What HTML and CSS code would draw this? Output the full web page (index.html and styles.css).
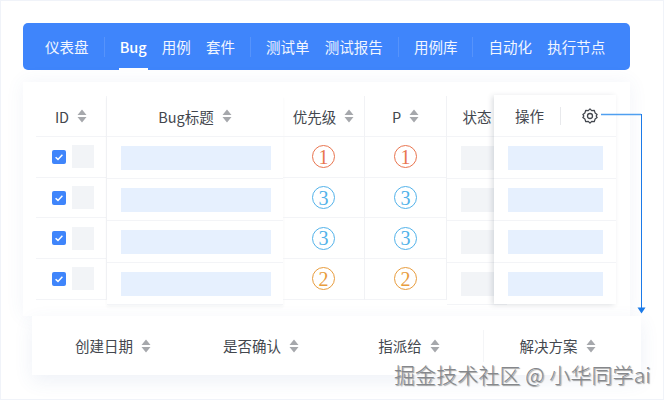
FILE: index.html
```html
<!DOCTYPE html>
<html lang="zh">
<head>
<meta charset="utf-8">
<title>Bug</title>
<link rel="stylesheet" href="styles.css">
</head>
<body>
<svg class="defs" width="0" height="0"><symbol id="sort" viewBox="0 0 10 14"><path d="M5 .5 9.500 6H.5zM5 13.500.5 8h9z" fill="#a6a8ac"/></symbol></svg>
<div class="page">
  <nav class="nav">
    <a>仪表盘</a><i></i>
    <a class="on">Bug</a><a>用例</a><a>套件</a><i></i>
    <a>测试单</a><a>测试报告</a><i></i>
    <a>用例库</a><i></i>
    <a>自动化</a><a>执行节点</a>
  </nav>
  <section class="card">
    <div class="table">
      <div class="col c-id">
        <div class="head">ID<svg class="sort"><use href="#sort"/></svg></div>
        <div class="row short"><b class="chk"><svg viewBox="0 0 14 14"><path d="M3.600 7.200 6 9.400l4.400-4.600"/></svg></b><span class="ph"></span></div>
        <div class="row short"><b class="chk"><svg viewBox="0 0 14 14"><path d="M3.600 7.200 6 9.400l4.400-4.600"/></svg></b><span class="ph"></span></div>
        <div class="row short"><b class="chk"><svg viewBox="0 0 14 14"><path d="M3.600 7.200 6 9.400l4.400-4.600"/></svg></b><span class="ph"></span></div>
        <div class="row short"><b class="chk"><svg viewBox="0 0 14 14"><path d="M3.600 7.200 6 9.400l4.400-4.600"/></svg></b><span class="ph"></span></div>
      </div>
      <div class="col c-title">
        <div class="head">Bug标题<svg class="sort"><use href="#sort"/></svg></div>
        <div class="row tall"><span class="bar"></span></div>
        <div class="row tall"><span class="bar"></span></div>
        <div class="row tall"><span class="bar"></span></div>
        <div class="row tall"><span class="bar"></span></div>
      </div>
      <div class="col c-pri">
        <div class="head">优先级<svg class="sort"><use href="#sort"/></svg></div>
        <div class="row short"><span class="num red">1</span></div>
        <div class="row short"><span class="num blue">3</span></div>
        <div class="row short"><span class="num blue">3</span></div>
        <div class="row short"><span class="num amber">2</span></div>
      </div>
      <div class="col c-pri">
        <div class="head">P<svg class="sort"><use href="#sort"/></svg></div>
        <div class="row short"><span class="num red">1</span></div>
        <div class="row short"><span class="num blue">3</span></div>
        <div class="row short"><span class="num blue">3</span></div>
        <div class="row short"><span class="num amber">2</span></div>
      </div>
      <div class="col c-status">
        <div class="head">状态</div>
        <div class="row tall"><span class="ph wide"></span></div>
        <div class="row tall"><span class="ph wide"></span></div>
        <div class="row tall"><span class="ph wide"></span></div>
        <div class="row tall"><span class="ph wide"></span></div>
      </div>
      <div class="ops">
        <div class="head ops-head">
          <span>操作</span><i></i>
          <svg class="gear" viewBox="0 0 16 16"><path d="M8 .9 9.700 2.600l2.500-.3.900 2.600 2 1.500L14.200 8l.9 1.600-2 1.500-.9 2.600-2.500-.3L8 15.100l-1.700-1.700-2.500.3-.9-2.600-2-1.500L1.800 8 .9 6.400l2-1.500.9-2.600 2.500.3z"/><circle cx="8" cy="8" r="2.500"/></svg>
        </div>
        <div class="row tall"><span class="bar small"></span></div>
        <div class="row tall"><span class="bar small"></span></div>
        <div class="row tall"><span class="bar small"></span></div>
        <div class="row tall"><span class="bar small"></span></div>
      </div>
    </div>
  </section>
  <section class="extra">
    <div>创建日期<svg class="sort"><use href="#sort"/></svg></div>
    <div>是否确认<svg class="sort"><use href="#sort"/></svg></div>
    <div>指派给<svg class="sort"><use href="#sort"/></svg></div>
    <div class="split">解决方案<svg class="sort"><use href="#sort"/></svg></div>
  </section>
  <svg class="arrow" viewBox="0 0 48 208" width="48" height="208"><path class="h" d="M1 4.500H41"/><path class="v" d="M41.500 4V198"/><path class="t" d="M37.500 197.500h8l-4 6z"/></svg>
  <div class="mark">掘金技术社区 @ 小华同学ai</div>
</div>
</body>
</html>
```
FILE: styles.css
```css
* { box-sizing: border-box; }
html, body { margin: 0; padding: 0; background: #fff; }
body { font-family: "Noto Sans CJK SC", "Noto Sans", sans-serif; color: #43474e; }
.defs { position: absolute; }
.page {
  position: relative;
  width: 664px;
  height: 400px;
  padding: 23px 34px 0 23px;
  overflow: hidden;
  background: #fff;
  box-shadow: inset 0 0 0 1px #f0f3f9;
}
.nav {
  display: flex;
  align-items: center;
  gap: 15.100px;
  height: 47px;
  padding-left: 22px;
  background: #3f85fb;
  border-radius: 5px;
  color: #f2f6ff;
  font-size: 14.500px;
}
.nav a { position: relative; line-height: 47px; white-space: nowrap; }
.nav i { width: 1px; height: 20px; background: rgba(255, 255, 255, .12); }
.nav .on { padding: 0 1px; margin: 0 -1px; font-weight: 500; color: #fff; }
.nav .on::after {
  content: "";
  position: absolute;
  left: 0;
  right: 0;
  bottom: 0;
  height: 2px;
  background: #fff;
}
.card {
  height: 234px;
  margin-top: 12px;
  padding: 14px 0 0 13px;
  background: #fff;
  box-shadow: 0 0 18px rgba(70, 100, 170, .07);
}
.table { position: relative; display: flex; align-items: flex-start; width: 594px; height: 220px; }
.col { flex: none; }
.c-id { width: 71px; border-right: 1px solid #f3f4f7; }
.c-title { width: 176px; box-shadow: 0 2px 3px rgba(60, 70, 100, .05); }
.c-pri { width: 82px; border-right: 1px solid #f1f2f5; }
.c-status { width: 60px; }
.head {
  display: flex;
  align-items: center;
  justify-content: center;
  height: 41px;
  border-bottom: 1px solid #f3f4f7;
  font-size: 14.500px;
}
.sort { flex: none; width: 10px; height: 14px; margin-left: 8px; }
.row { display: flex; align-items: center; border-bottom: 1px solid #f3f4f7; }
.short { height: 40.700px; justify-content: center; }
.tall { height: 42px; }
.c-id .row { padding-left: 16px; justify-content: flex-start; gap: 6px; }
.chk {
  display: block;
  width: 14px;
  height: 14px;
  border-radius: 2px;
  background: #3f85fb;
}
.chk svg { display: block; width: 14px; height: 14px; fill: none; stroke: #fff; stroke-width: 1.500; }
.ph { display: block; width: 22px; height: 23px; background: #f2f4f7; }
.ph.wide { width: 60px; height: 24px; margin-left: 14px; }
.bar { display: block; width: 150px; height: 24px; margin-left: 14px; background: #e6f0fe; }
.bar.small { width: 95px; }
.num {
  display: flex;
  align-items: center;
  justify-content: center;
  width: 23px;
  height: 23px;
  border: 1.500px solid;
  border-radius: 50%;
  font-family: "Liberation Serif", serif;
  font-size: 20px;
  line-height: 1;
}
.red { color: #e9754f; }
.blue { color: #52b2ea; }
.amber { color: #e89c3d; }
.ops {
  position: absolute;
  left: 458px;
  top: -1px;
  width: 122px;
  height: 209px;
  background: #fff;
  box-shadow: -2px 1px 5px rgba(50, 60, 80, .16);
}
.ops-head { justify-content: flex-start; height: 42px; padding-left: 21px; }
.ops-head i { width: 1px; height: 18px; margin: 0 21px 0 16px; background: #e8e9ec; }
.gear { width: 16px; height: 16px; fill: none; stroke: #43474e; stroke-width: 1.300; stroke-linejoin: round; }
.ops .row:last-child { border-bottom: 0; }
.extra {
  position: relative;
  display: grid;
  grid-template-columns: repeat(4, 148px);
  align-items: center;
  width: 609px;
  height: 59px;
  margin-left: 9px;
  padding-left: 7px;
  background: #fff;
  box-shadow: 0 6px 18px rgba(70, 100, 170, .09);
  font-size: 14.500px;
}
.extra div { display: flex; align-items: center; justify-content: center; height: 32px; }
.extra .split { border-left: 1px solid #f4f5f7; }
.arrow { position: absolute; left: 600px; top: 110px; }
.arrow path { fill: none; }
.arrow .h { stroke: #4f9ff0; stroke-width: 1.500; }
.arrow .v { stroke: #1b7ae8; stroke-width: 1; }
.arrow .t { fill: #1b7ae8; }
.mark {
  position: absolute;
  left: 394px;
  top: 359px;
  font-size: 21px;
  font-weight: 300;
  letter-spacing: .1px;
  line-height: 30px;
  white-space: nowrap;
  color: #85878b;
  text-shadow: 1px 1px 1px rgba(60, 60, 60, .5), -1px -1px 1px rgba(255, 255, 255, .9);
}
```
